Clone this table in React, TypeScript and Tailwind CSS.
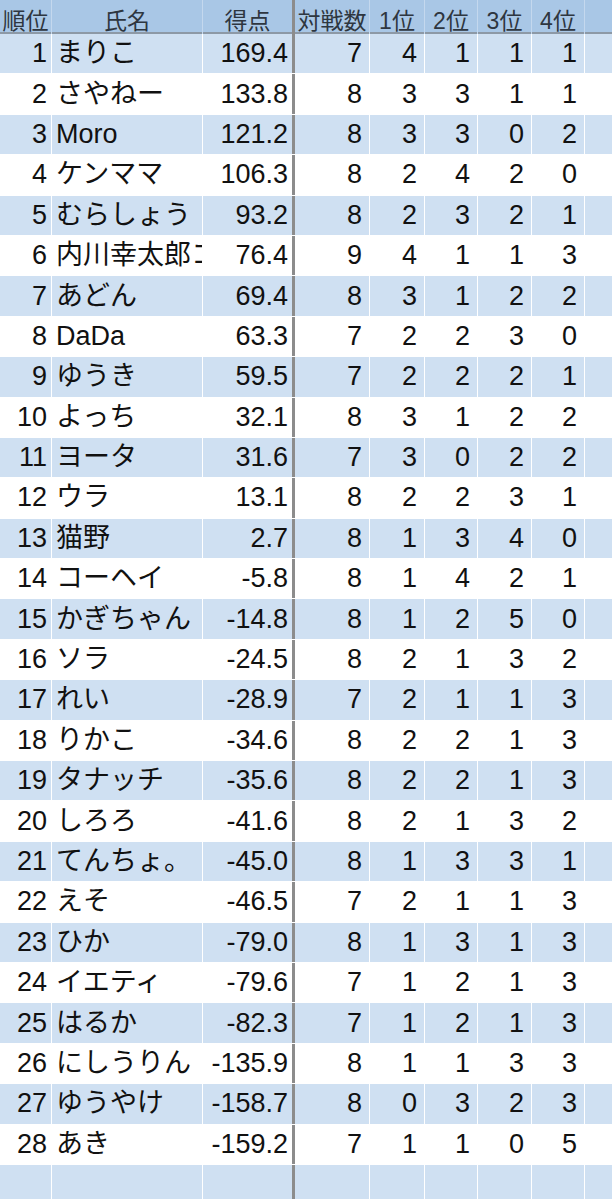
const rows: [number, string, string, number, number, number, number, number][] = [
  [1, 'まりこ', '169.4', 7, 4, 1, 1, 1],
  [2, 'さやねー', '133.8', 8, 3, 3, 1, 1],
  [3, 'Moro', '121.2', 8, 3, 3, 0, 2],
  [4, 'ケンママ', '106.3', 8, 2, 4, 2, 0],
  [5, 'むらしょう', '93.2', 8, 2, 3, 2, 1],
  [6, '内川幸太郎コ', '76.4', 9, 4, 1, 1, 3],
  [7, 'あどん', '69.4', 8, 3, 1, 2, 2],
  [8, 'DaDa', '63.3', 7, 2, 2, 3, 0],
  [9, 'ゆうき', '59.5', 7, 2, 2, 2, 1],
  [10, 'よっち', '32.1', 8, 3, 1, 2, 2],
  [11, 'ヨータ', '31.6', 7, 3, 0, 2, 2],
  [12, 'ウラ', '13.1', 8, 2, 2, 3, 1],
  [13, '猫野', '2.7', 8, 1, 3, 4, 0],
  [14, 'コーヘイ', '-5.8', 8, 1, 4, 2, 1],
  [15, 'かぎちゃん', '-14.8', 8, 1, 2, 5, 0],
  [16, 'ソラ', '-24.5', 8, 2, 1, 3, 2],
  [17, 'れい', '-28.9', 7, 2, 1, 1, 3],
  [18, 'りかこ', '-34.6', 8, 2, 2, 1, 3],
  [19, 'タナッチ', '-35.6', 8, 2, 2, 1, 3],
  [20, 'しろろ', '-41.6', 8, 2, 1, 3, 2],
  [21, 'てんちょ。', '-45.0', 8, 1, 3, 3, 1],
  [22, 'えそ', '-46.5', 7, 2, 1, 1, 3],
  [23, 'ひか', '-79.0', 8, 1, 3, 1, 3],
  [24, 'イエティ', '-79.6', 7, 1, 2, 1, 3],
  [25, 'はるか', '-82.3', 7, 1, 2, 1, 3],
  [26, 'にしうりん', '-135.9', 8, 1, 1, 3, 3],
  [27, 'ゆうやけ', '-158.7', 8, 0, 3, 2, 3],
  [28, 'あき', '-159.2', 7, 1, 1, 0, 5],
];

const cols = 'grid grid-cols-[52px_151px_92px_75px_55px_53px_54px_53px_27px]';

function HeaderCell({ children, last }: { children?: React.ReactNode; last?: boolean }) {
  return (
    <div className={`flex items-center justify-center pt-1 ${last ? '' : 'border-r border-[#c4d8ee]'}`}>
      {children}
    </div>
  );
}

export default function App() {
  return (
    <div
      className="w-[612px] h-[1199px] overflow-hidden bg-white text-[#111]"
      style={{ fontFamily: '"Liberation Sans", "Noto Sans CJK JP", sans-serif' }}
    >
      {/* header */}
      <div className={`${cols} h-[34px] bg-[#a9c7e6] border-b-2 border-[#8d99a6] text-[23px] text-[#2e3640]`}>
        <HeaderCell>順位</HeaderCell>
        <HeaderCell>氏名</HeaderCell>
        <div className="flex items-center justify-center pt-1 border-r-[3px] border-[#8c8c8c]">得点</div>
        <HeaderCell>対戦数</HeaderCell>
        <HeaderCell>1位</HeaderCell>
        <HeaderCell>2位</HeaderCell>
        <HeaderCell>3位</HeaderCell>
        <HeaderCell>4位</HeaderCell>
        <HeaderCell last />
      </div>

      {/* body */}
      {[...rows, null].map((r, i) => {
        const blue = i % 2 === 0;
        const bg = blue ? 'bg-[#cfe0f2]' : 'bg-white';
        const line = 'border-r border-white';
        return (
          <div key={i} className={`${cols} h-[40.4px] ${bg} border-b border-white text-[27px] leading-none`}>
            <div className={`flex items-center justify-end pr-[4px] ${line}`}>{r?.[0]}</div>
            <div className={`flex items-center pl-[4px] overflow-hidden whitespace-nowrap ${line}`}>{r?.[1]}</div>
            <div className="flex items-center justify-end pr-[4px] border-r-[3px] border-[#8c8c8c]">{r?.[2]}</div>
            <div className={`flex items-center justify-end pr-[7px] ${line}`}>{r?.[3]}</div>
            <div className={`flex items-center justify-end pr-[7px] ${line}`}>{r?.[4]}</div>
            <div className={`flex items-center justify-end pr-[7px] ${line}`}>{r?.[5]}</div>
            <div className={`flex items-center justify-end pr-[7px] ${line}`}>{r?.[6]}</div>
            <div className={`flex items-center justify-end pr-[7px] ${line}`}>{r?.[7]}</div>
            <div />
          </div>
        );
      })}
    </div>
  );
}
